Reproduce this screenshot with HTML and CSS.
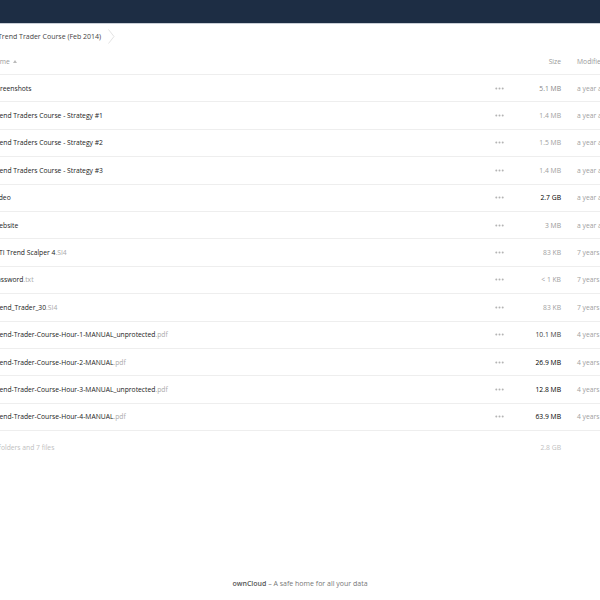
FILE: index.html
```html
<!DOCTYPE html>
<html>
<head>
<meta charset="utf-8">
<link rel="stylesheet" href="styles.css">
</head>
<body>
<div class="page">
  <header class="topbar"></header>
  <div class="controls">
    <div class="crumb">
      <span class="crumb-text">Trend Trader Course (Feb 2014)</span>
      <svg class="crumb-sep" width="7" height="15" viewBox="0 0 7 15"><path d="M0.5 0.5 L6 7.5 L0.5 14.5" fill="none" stroke="#dcdcdc" stroke-width="0.8"/></svg>
    </div>
  </div>
  <div class="files">
    <div class="row head">
      <div class="c-name head-name">Name <svg class="sort" width="4" height="3" viewBox="0 0 4 3"><path d="M0 3 L2 0 L4 3 Z" fill="#bbb"/></svg></div>
      <div class="c-act"></div>
      <div class="c-size">Size</div>
      <div class="c-mod">Modified</div>
    </div>
    <div class="row"><div class="c-name">Screenshots</div><div class="c-act"><svg class="dots" width="9" height="3" viewBox="0 0 9 3"><circle cx="1.3" cy="1.5" r="1" /><circle cx="4.5" cy="1.5" r="1" /><circle cx="7.7" cy="1.5" r="1" /></svg></div><div class="c-size" style="color:rgb(134,134,134)">5.1 MB</div><div class="c-mod">a year ago</div></div>
    <div class="row"><div class="c-name">Trend Traders Course - Strategy #1</div><div class="c-act"><svg class="dots" width="9" height="3" viewBox="0 0 9 3"><circle cx="1.3" cy="1.5" r="1" /><circle cx="4.5" cy="1.5" r="1" /><circle cx="7.7" cy="1.5" r="1" /></svg></div><div class="c-size" style="color:rgb(158,158,158)">1.4 MB</div><div class="c-mod">a year ago</div></div>
    <div class="row"><div class="c-name">Trend Traders Course - Strategy #2</div><div class="c-act"><svg class="dots" width="9" height="3" viewBox="0 0 9 3"><circle cx="1.3" cy="1.5" r="1" /><circle cx="4.5" cy="1.5" r="1" /><circle cx="7.7" cy="1.5" r="1" /></svg></div><div class="c-size" style="color:rgb(158,158,158)">1.5 MB</div><div class="c-mod">a year ago</div></div>
    <div class="row"><div class="c-name">Trend Traders Course - Strategy #3</div><div class="c-act"><svg class="dots" width="9" height="3" viewBox="0 0 9 3"><circle cx="1.3" cy="1.5" r="1" /><circle cx="4.5" cy="1.5" r="1" /><circle cx="7.7" cy="1.5" r="1" /></svg></div><div class="c-size" style="color:rgb(158,158,158)">1.4 MB</div><div class="c-mod">a year ago</div></div>
    <div class="row"><div class="c-name">Video</div><div class="c-act"><svg class="dots" width="9" height="3" viewBox="0 0 9 3"><circle cx="1.3" cy="1.5" r="1" /><circle cx="4.5" cy="1.5" r="1" /><circle cx="7.7" cy="1.5" r="1" /></svg></div><div class="c-size" style="color:rgb(0,0,0)">2.7 GB</div><div class="c-mod">a year ago</div></div>
    <div class="row"><div class="c-name">Website</div><div class="c-act"><svg class="dots" width="9" height="3" viewBox="0 0 9 3"><circle cx="1.3" cy="1.5" r="1" /><circle cx="4.5" cy="1.5" r="1" /><circle cx="7.7" cy="1.5" r="1" /></svg></div><div class="c-size" style="color:rgb(151,151,151)">3 MB</div><div class="c-mod">a year ago</div></div>
    <div class="row"><div class="c-name">MTI Trend Scalper 4<span class="ext">.SI4</span></div><div class="c-act"><svg class="dots" width="9" height="3" viewBox="0 0 9 3"><circle cx="1.3" cy="1.5" r="1" /><circle cx="4.5" cy="1.5" r="1" /><circle cx="7.7" cy="1.5" r="1" /></svg></div><div class="c-size" style="color:rgb(160,160,160)">83 KB</div><div class="c-mod">7 years ago</div></div>
    <div class="row"><div class="c-name">Password<span class="ext">.txt</span></div><div class="c-act"><svg class="dots" width="9" height="3" viewBox="0 0 9 3"><circle cx="1.3" cy="1.5" r="1" /><circle cx="4.5" cy="1.5" r="1" /><circle cx="7.7" cy="1.5" r="1" /></svg></div><div class="c-size" style="color:rgb(160,160,160)">&lt; 1 KB</div><div class="c-mod">7 years ago</div></div>
    <div class="row"><div class="c-name">Trend_Trader_30<span class="ext">.SI4</span></div><div class="c-act"><svg class="dots" width="9" height="3" viewBox="0 0 9 3"><circle cx="1.3" cy="1.5" r="1" /><circle cx="4.5" cy="1.5" r="1" /><circle cx="7.7" cy="1.5" r="1" /></svg></div><div class="c-size" style="color:rgb(160,160,160)">83 KB</div><div class="c-mod">7 years ago</div></div>
    <div class="row"><div class="c-name">Trend-Trader-Course-Hour-1-MANUAL_unprotected<span class="ext">.pdf</span></div><div class="c-act"><svg class="dots" width="9" height="3" viewBox="0 0 9 3"><circle cx="1.3" cy="1.5" r="1" /><circle cx="4.5" cy="1.5" r="1" /><circle cx="7.7" cy="1.5" r="1" /></svg></div><div class="c-size" style="color:rgb(58,58,58)">10.1 MB</div><div class="c-mod">4 years ago</div></div>
    <div class="row"><div class="c-name">Trend-Trader-Course-Hour-2-MANUAL<span class="ext">.pdf</span></div><div class="c-act"><svg class="dots" width="9" height="3" viewBox="0 0 9 3"><circle cx="1.3" cy="1.5" r="1" /><circle cx="4.5" cy="1.5" r="1" /><circle cx="7.7" cy="1.5" r="1" /></svg></div><div class="c-size" style="color:rgb(0,0,0)">26.9 MB</div><div class="c-mod">4 years ago</div></div>
    <div class="row"><div class="c-name">Trend-Trader-Course-Hour-3-MANUAL_unprotected<span class="ext">.pdf</span></div><div class="c-act"><svg class="dots" width="9" height="3" viewBox="0 0 9 3"><circle cx="1.3" cy="1.5" r="1" /><circle cx="4.5" cy="1.5" r="1" /><circle cx="7.7" cy="1.5" r="1" /></svg></div><div class="c-size" style="color:rgb(0,0,0)">12.8 MB</div><div class="c-mod">4 years ago</div></div>
    <div class="row"><div class="c-name">Trend-Trader-Course-Hour-4-MANUAL<span class="ext">.pdf</span></div><div class="c-act"><svg class="dots" width="9" height="3" viewBox="0 0 9 3"><circle cx="1.3" cy="1.5" r="1" /><circle cx="4.5" cy="1.5" r="1" /><circle cx="7.7" cy="1.5" r="1" /></svg></div><div class="c-size" style="color:rgb(0,0,0)">63.9 MB</div><div class="c-mod">4 years ago</div></div>
    <div class="row summary"><div class="c-name">6 folders and 7 files</div><div class="c-act"></div><div class="c-size">2.8 GB</div><div class="c-mod"></div></div>
  </div>
  <footer class="footer"><span class="brand">ownCloud</span> – A safe home for all your data</footer>
</div>
</body>
</html>
```
FILE: styles.css
```css
html, body {
  margin: 0;
  padding: 0;
  width: 600px;
  height: 600px;
  overflow: hidden;
  background: #fff;
}
body {
  font-family: "Open Sans", "Noto Sans", sans-serif;
  font-size: 6.75px;
  color: #222;
}
.page {
  display: flex;
  flex-direction: column;
  height: 600px;
}
.topbar {
  height: 23px;
  background: #1d2d44;
  border-bottom: 1px solid #c9ced6;
  flex: none;
}
.controls {
  height: 24px;
  display: flex;
  align-items: center;
  margin-left: -2px;
  flex: none;
}
.crumb {
  display: flex;
  align-items: center;
  gap: 7px;
}
.crumb-text {
  color: #444;
  font-size: 7px;
}
.crumb-sep {
  display: block;
}
.files {
  margin-left: -7px;
  margin-right: -51px;
  flex: none;
}
.row {
  display: grid;
  grid-template-columns: 1fr 24px 50px 90px;
  height: 26.4px;
  align-items: center;
  border-bottom: 1px solid #eeeeee;
  white-space: nowrap;
}
.row.head {
  height: 26px;
}
.c-name {
  overflow: hidden;
  color: #222;
}
.head-name {
  margin-left: -2px;
  color: #999;
  display: flex;
  align-items: center;
}
.sort {
  display: block;
  margin-left: 3px;
}
.ext {
  color: #aaa;
}
.c-act {
  display: flex;
  justify-content: center;
  align-items: center;
}
.dots {
  display: block;
  fill: #b4b4b4;
}
.c-size {
  text-align: right;
  color: #999;
}
.c-mod {
  padding-left: 16px;
  color: #a0a0a0;
}
.head .c-size, .head .c-mod {
  color: #999;
}
.row.summary {
  border-bottom: none;
  height: 33px;
}
.summary .c-name, .summary .c-size {
  color: #c0c0c0;
}
.footer {
  margin-top: auto;
  height: 21px;
  text-align: center;
  color: #777;
  font-size: 7px;
}
.brand {
  font-weight: 600;
  color: #555;
}
```
